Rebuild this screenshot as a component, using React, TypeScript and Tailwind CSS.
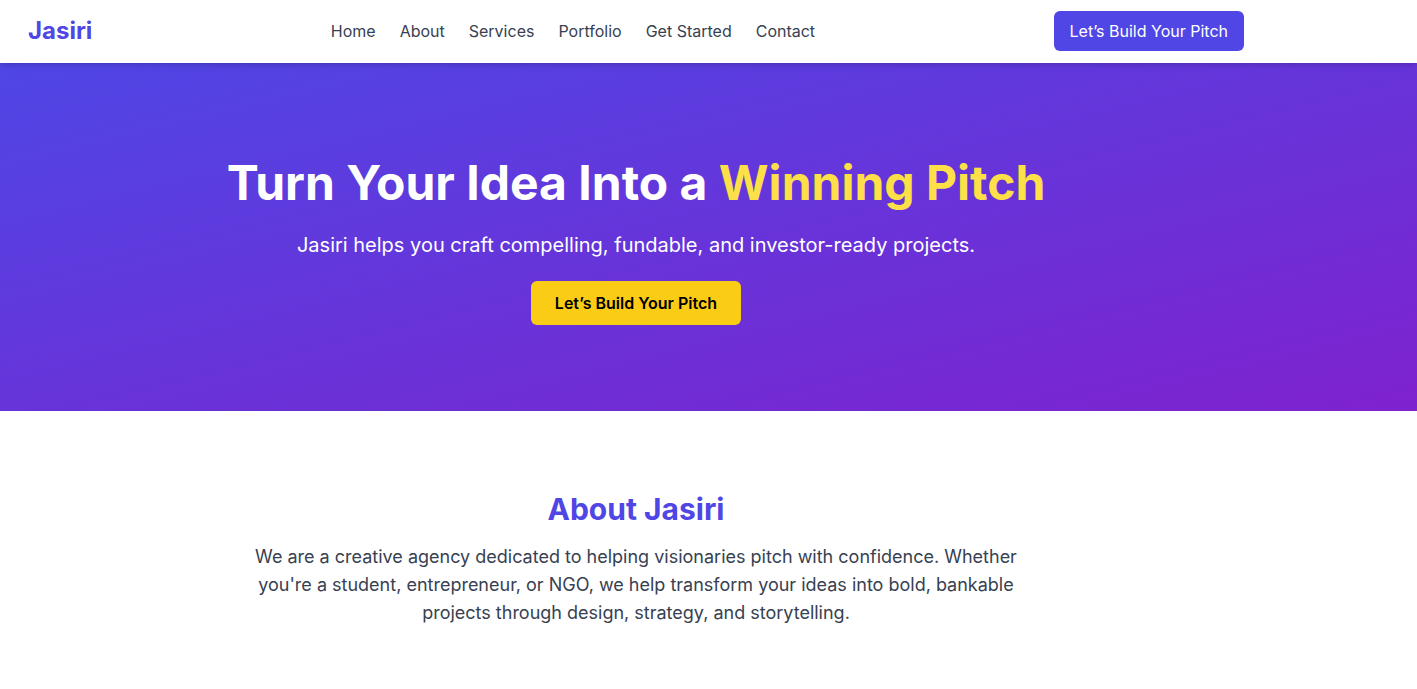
const navLinks = ["Home", "About", "Services", "Portfolio", "Get Started", "Contact"];

function Header() {
  return (
    <header className="relative z-10 bg-white shadow-md">
      <div className="flex h-[63px] w-[1272px] items-center justify-between px-7 pb-px">
        <a href="#" className="text-2xl font-bold text-[#4f46e5]">
          Jasiri
        </a>
        <nav className="flex gap-6 text-base text-[#374151]">
          {navLinks.map((link) => (
            <a key={link} href="#" className="hover:text-[#4f46e5]">
              {link}
            </a>
          ))}
        </nav>
        <a
          href="#"
          className="rounded-md bg-[#4f46e5] px-4 py-2 text-base text-white hover:bg-[#4338ca]"
        >
          Let’s Build Your Pitch
        </a>
      </div>
    </header>
  );
}

function Hero() {
  return (
    <section className="bg-[linear-gradient(to_bottom_right,#4f46e5,#7e22ce)] text-white">
      <div className="w-[1272px] px-7 pt-[96px] pb-[86px] text-center">
        <h1 className="mb-6 text-5xl font-bold">
          Turn Your Idea Into a <span className="text-[#fde047]">Winning Pitch</span>
        </h1>
        <p className="mb-[22px] text-xl">
          Jasiri helps you craft compelling, fundable, and investor-ready projects.
        </p>
        <a
          href="#"
          className="inline-block rounded-md bg-[#facc15] px-6 py-2.5 text-base font-semibold text-black hover:bg-[#fde047]"
        >
          Let’s Build Your Pitch
        </a>
      </div>
    </section>
  );
}

function About() {
  return (
    <section className="bg-white">
      <div className="w-[1272px] px-7 py-20 text-center">
        <h2 className="mb-4 text-3xl font-bold text-[#4f46e5]">About Jasiri</h2>
        <p className="mx-auto max-w-3xl text-lg text-[#374151]">
          We are a creative agency dedicated to helping visionaries pitch with confidence. Whether
          you're a student, entrepreneur, or NGO, we help transform your ideas into bold, bankable
          projects through design, strategy, and storytelling.
        </p>
      </div>
    </section>
  );
}

export default function App() {
  return (
    <div className="min-h-screen bg-white font-['Inter',sans-serif]">
      <Header />
      <Hero />
      <About />
    </div>
  );
}
